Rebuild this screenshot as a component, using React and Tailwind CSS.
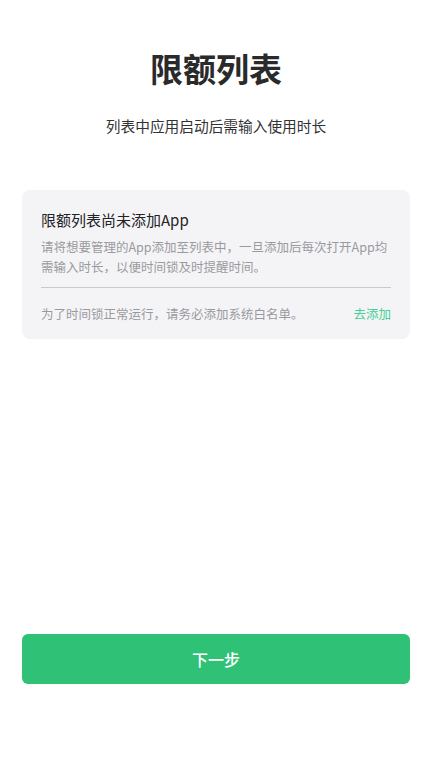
export default function App() {
  const font = { fontFamily: '"Noto Sans CJK SC", "Noto Sans", sans-serif' };
  return (
    <div className="w-[432px] h-[768px] bg-white flex flex-col" style={font}>
      <div className="pt-[44px] text-center text-[33px] leading-[48px] font-bold text-[#2a2a2a]">限额列表</div>
      <div className="mt-[23px] text-center text-[14.7px] leading-[22px] text-[#333333]">列表中应用启动后需输入使用时长</div>
      <div className="mx-[22px] mt-[53px] rounded-[8px] bg-[#f4f4f7] px-[19px] pt-[18px] pb-[15px]">
        <div className="text-[15px] leading-[24px] text-[#222222]">限额列表尚未添加App</div>
        <div className="mt-[5px] text-[12.5px] leading-[20px] text-[#9a9a9e]">请将想要管理的App添加至列表中，一旦添加后每次打开App均需输入时长，以便时间锁及时提醒时间。</div>
        <div className="mt-[10px] h-px bg-[#c9c9cf]"></div>
        <div className="mt-[16px] flex items-center justify-between text-[12.5px] leading-[20px]">
          <span className="text-[#9a9a9e]">为了时间锁正常运行，请务必添加系统白名单。</span>
          <span className="text-[#45cf98]">去添加</span>
        </div>
      </div>
      <div className="flex-1"></div>
      <div className="mx-[22px] mb-[84px] h-[50px] rounded-[6px] bg-[#2fc277] flex items-center justify-center text-white text-[16px] font-medium">下一步</div>
    </div>
  );
}
